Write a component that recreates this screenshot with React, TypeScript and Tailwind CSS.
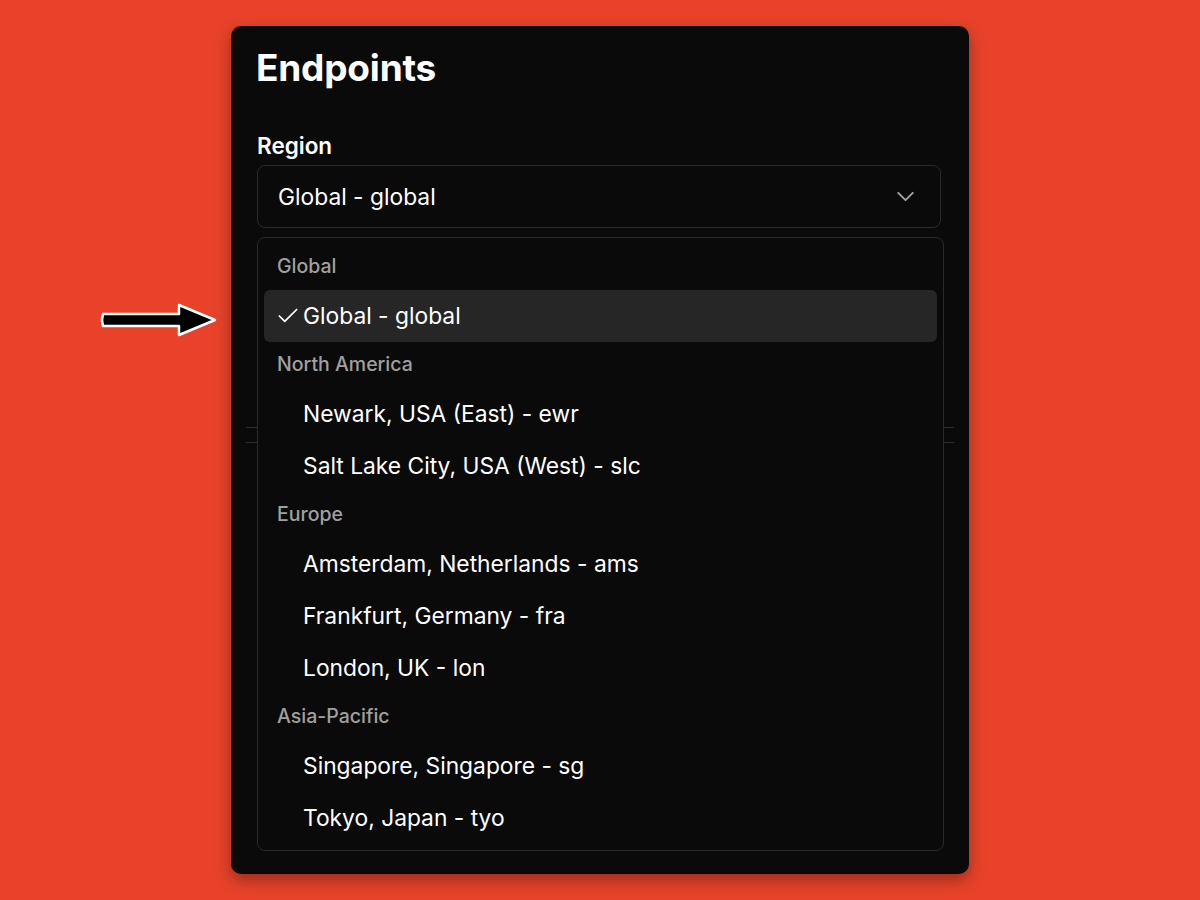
import React from 'react';
import { Check, ChevronDown } from 'lucide-react';

type Group = { label: string; items: string[] };

const groups: Group[] = [
  { label: 'Global', items: ['Global - global'] },
  { label: 'North America', items: ['Newark, USA (East) - ewr', 'Salt Lake City, USA (West) - slc'] },
  { label: 'Europe', items: ['Amsterdam, Netherlands - ams', 'Frankfurt, Germany - fra', 'London, UK - lon'] },
  { label: 'Asia-Pacific', items: ['Singapore, Singapore - sg', 'Tokyo, Japan - tyo'] },
];

const selected = 'Global - global';

const Arrow = () => (
  <svg width="120" height="40" viewBox="0 0 120 40" className="absolute left-[99px] top-[300px]">
    <path
      d="M4 14 L80 14 L80 5 L116 20 L80 35 L80 26 L4 26 Q2 20 4 14 Z"
      fill="#000"
      stroke="#fff"
      strokeWidth="2.5"
      strokeLinejoin="round"
    />
  </svg>
);

export default function App() {
  return (
    <div className="relative min-h-screen w-full bg-[#e8432a] flex justify-center pt-[26px] font-['Inter',sans-serif]">
      <Arrow />
      <div className="w-[738px] h-[848px] bg-[#0a0a0a] rounded-[10px] px-[26px] pt-[18px] shadow-[0_6px_16px_rgba(0,0,0,0.35)]">
        <h1 className="-ml-[1px] text-[37px] leading-[48px] font-bold text-white tracking-[-0.2px]">Endpoints</h1>

        <div className="mt-[39px] text-[22.5px] leading-[30px] font-semibold text-white">Region</div>

        <div className="relative mt-[4px]">
          <button className="w-[684px] h-[63px] rounded-[8px] border border-[#2a2a2a] flex items-center justify-between pl-[20px] pr-[20px] text-white text-[22.8px]">
            <span className="mt-[2px]">Global - global</span>
            <ChevronDown className="w-[29px] h-[29px] text-[#a3a3a3]" strokeWidth={1.6} />
          </button>

          {/* content hidden under the open menu */}
          <div className="-mx-[11px] mt-[199px]">
            <div className="border-t border-[#2e2e2e]" />
            <div className="h-[14px]" />
            <div className="border-t border-[#2e2e2e]" />
          </div>

          <div className="absolute left-0 top-[72px] w-[687px] rounded-[8px] border border-[#2a2a2a] bg-[#0a0a0a] p-[6px]">
            {groups.map((g) => (
              <div key={g.label}>
                <div className="h-[46px] flex items-center pl-[13px] text-[19.5px] font-medium text-[#a0a0a0]">{g.label}</div>
                {g.items.map((item) => {
                  const active = item === selected;
                  return (
                    <div
                      key={item}
                      className={`h-[52px] flex items-center rounded-[6px] text-[22.8px] text-white ${active ? 'bg-[#262626]' : ''}`}
                    >
                      <span className="w-[39px] flex justify-end pr-[2px]">
                        {active && <Check className="w-[26px] h-[26px] text-white" strokeWidth={1.6} />}
                      </span>
                      <span>{item}</span>
                    </div>
                  );
                })}
              </div>
            ))}
          </div>
        </div>
      </div>
    </div>
  );
}
